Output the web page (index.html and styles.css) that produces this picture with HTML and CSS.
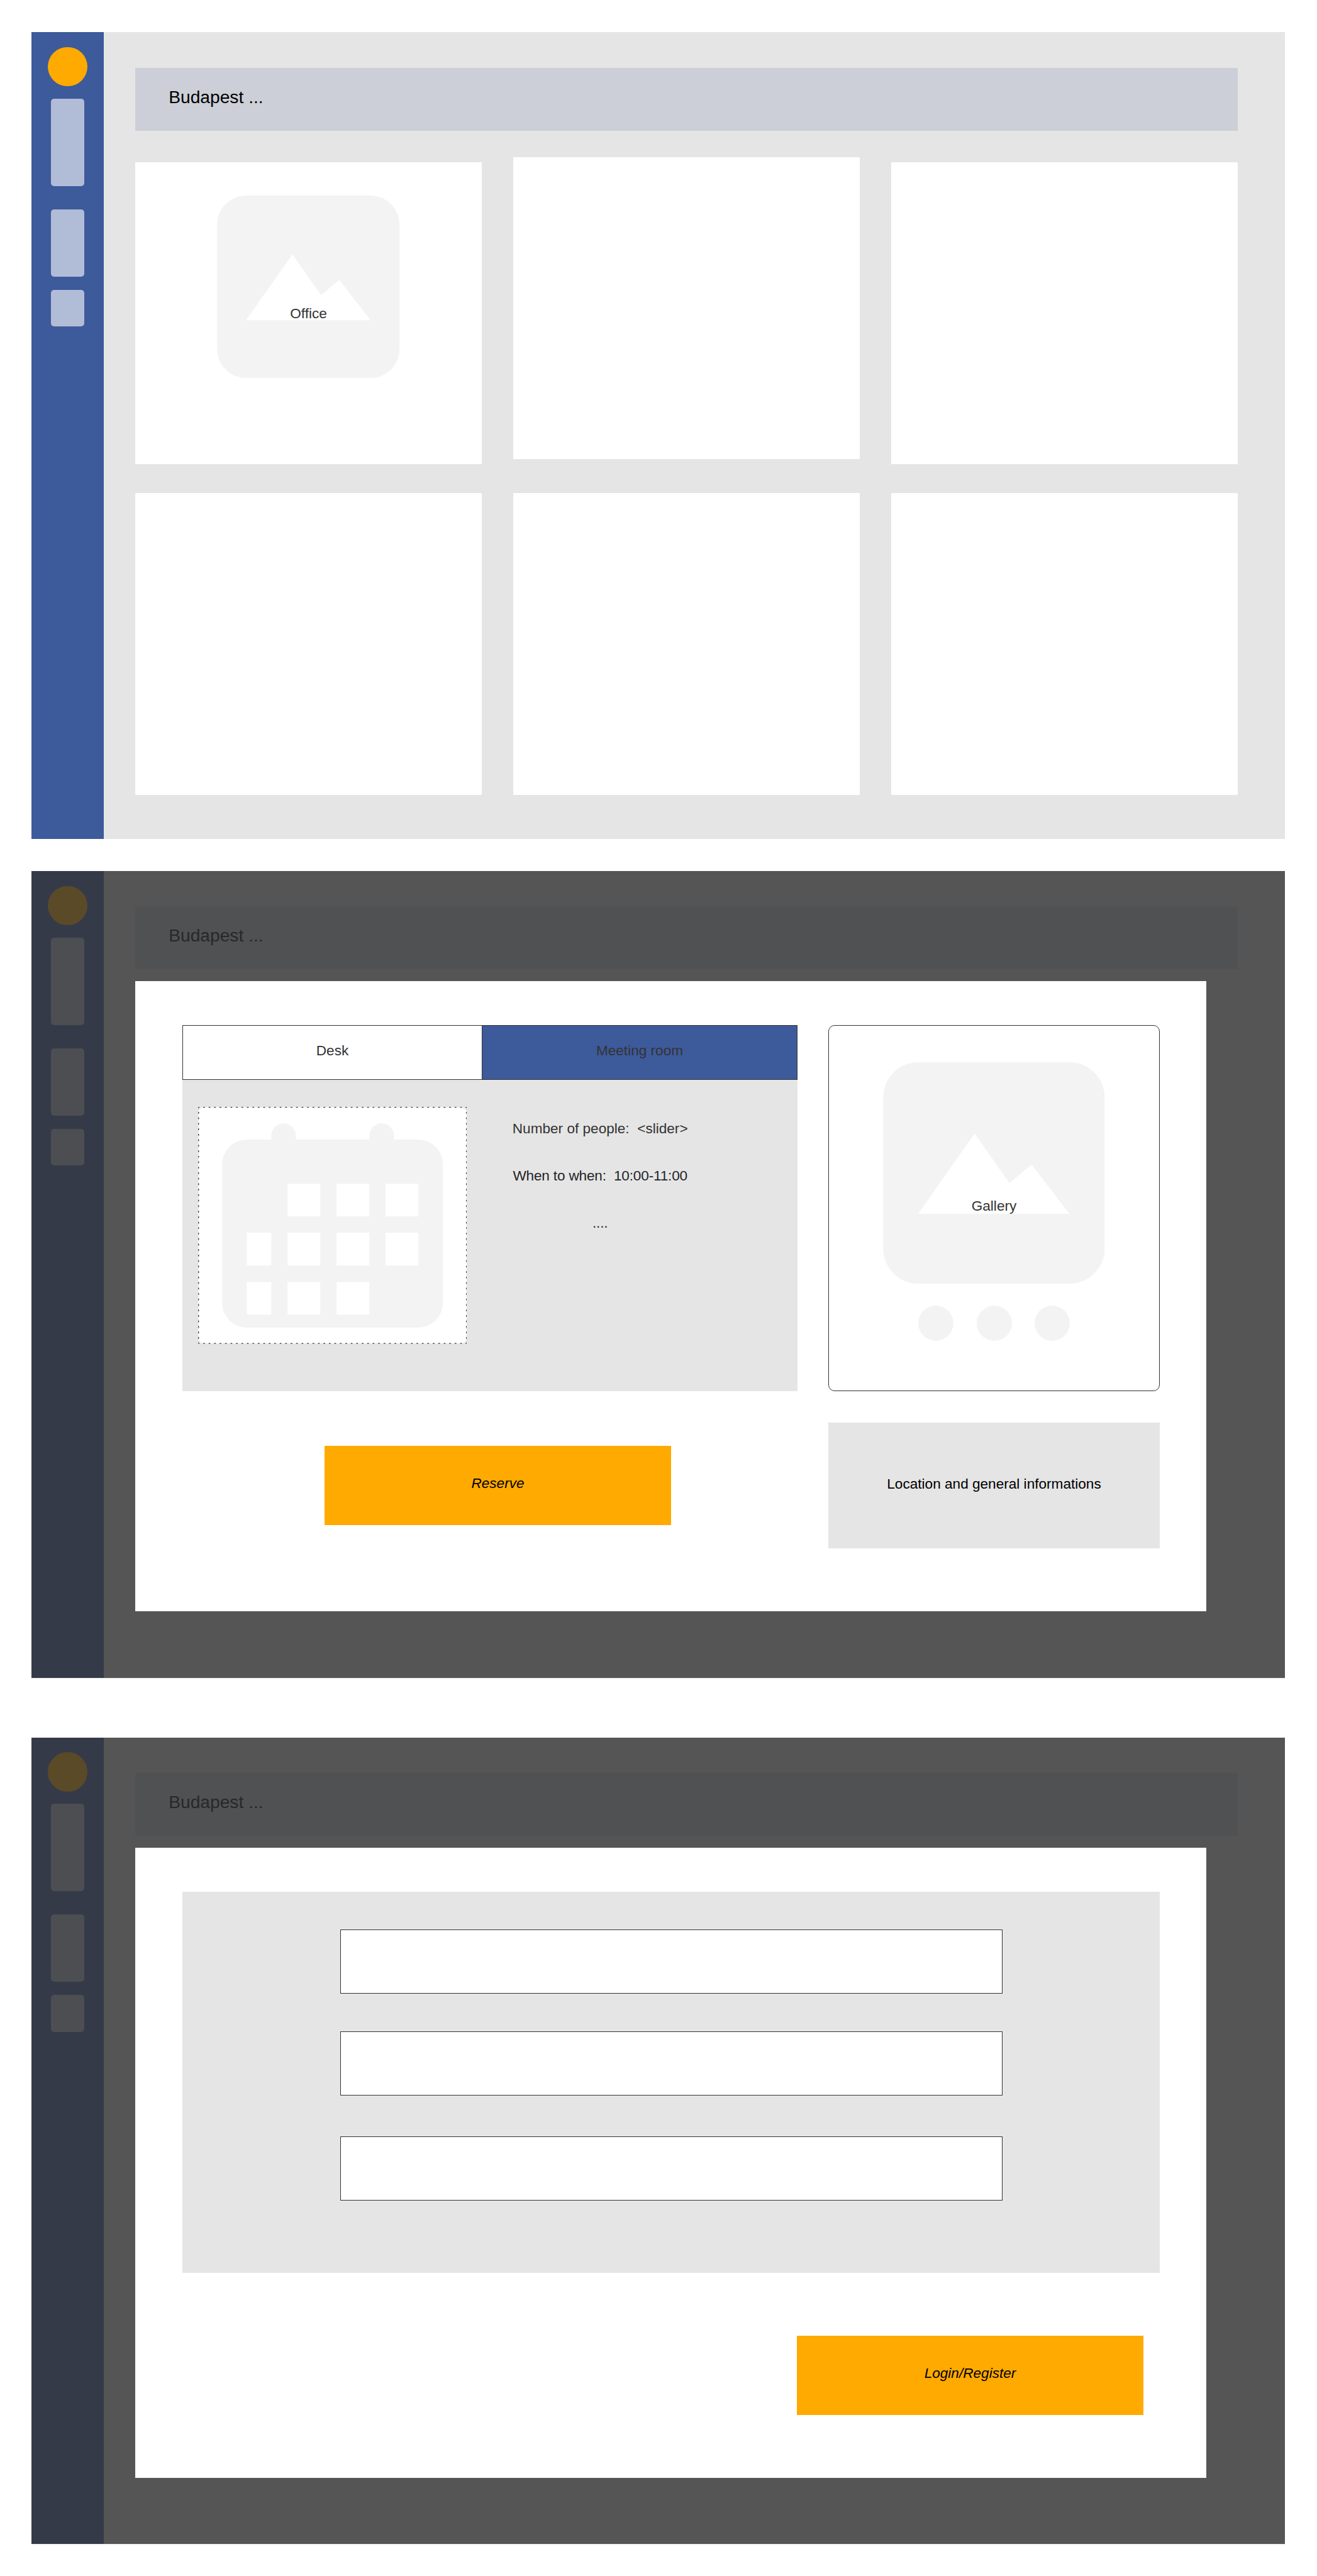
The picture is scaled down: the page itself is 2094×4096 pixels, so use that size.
FILE: index.html
```html
<!DOCTYPE html>
<html lang="en">
<head>
<meta charset="utf-8">
<title>Office reservation wireframes</title>
<link rel="stylesheet" href="styles.css">
</head>
<body>
<svg class="defs" aria-hidden="true">
  <symbol id="picture" viewBox="0 0 100 100">
    <rect width="100" height="100" rx="15.9" fill="#f3f3f3"/>
    <path d="M15.8 68.4 41.3 32.2 57 54.6 67 46.2 84.1 68.4Z" fill="#fff"/>
  </symbol>
</svg>

<section class="screen screen-overview">
  <nav class="sidebar">
    <span class="avatar"></span>
    <span class="item item-tall"></span>
    <span class="item item-medium"></span>
    <span class="item item-small"></span>
  </nav>
  <main class="content">
    <header class="topbar">Budapest ...</header>
    <div class="cards">
      <article class="card">
        <svg class="card-picture"><use href="#picture"/></svg>
        <span class="card-label">Office</span>
      </article>
      <article class="card card-raised"></article>
      <article class="card"></article>
      <article class="card"></article>
      <article class="card"></article>
      <article class="card"></article>
    </div>
  </main>
</section>

<section class="screen dimmed screen-reserve">
  <nav class="sidebar">
    <span class="avatar"></span>
    <span class="item item-tall"></span>
    <span class="item item-medium"></span>
    <span class="item item-small"></span>
  </nav>
  <main class="content">
    <header class="topbar">Budapest ...</header>
    <div class="modal reserve">
      <div class="booking">
        <div class="tabs">
          <div class="tab">Desk</div>
          <div class="tab tab-active">Meeting room</div>
        </div>
        <div class="booking-body">
          <svg class="calendar" viewBox="0 0 427.4 376.8">
            <rect x=".7" y=".7" width="426" height="375.4" rx="8" fill="#fff"/>
            <path d="M.7.7H426.7M.7 376.1H426.7" fill="none" stroke="#333" stroke-width="1.33" stroke-dasharray="2.7 5.994" stroke-dashoffset="1.35"/>
            <path d="M.7.7V376.1M426.7.7V376.1" fill="none" stroke="#333" stroke-width="1.33" stroke-dasharray="2.7 6.03" stroke-dashoffset="1.35"/>
            <g fill="#f3f3f3">
              <rect x="38.2" y="51.9" width="351" height="299.1" rx="39.2"/>
              <path d="M116.3 52V45.5a19.5 19.2 0 0 1 39 0V52ZM272.3 52V45.5a19.5 19.2 0 0 1 39 0V52Z"/>
            </g>
            <g fill="#fff">
              <path d="M142.2 122.2h52v52h-52zM220.2 122.2h52v52h-52zM298.2 122.2h52v52h-52z"/>
              <path d="M77.4 200.1h39v52.2h-39zM142.2 200.1h52v52.2h-52zM220.2 200.1h52v52.2h-52zM298.2 200.1h52v52.2h-52z"/>
              <path d="M77.4 278.4h39v51.8h-39zM142.2 278.4h52v51.8h-52zM220.2 278.4h52v51.8h-52z"/>
            </g>
          </svg>
          <div class="fields">
            <p>Number of people:  &lt;slider&gt;</p>
            <p class="strong">When to when:  10:00-11:00</p>
            <p class="strong">....</p>
          </div>
        </div>
        <div class="button">Reserve</div>
      </div>
      <aside class="details">
        <div class="gallery">
          <svg class="gallery-picture"><use href="#picture"/></svg>
          <span class="gallery-label">Gallery</span>
          <div class="dots"><i></i><i></i><i></i></div>
        </div>
        <div class="location">Location and general informations</div>
      </aside>
    </div>
  </main>
</section>

<section class="screen dimmed screen-login">
  <nav class="sidebar">
    <span class="avatar"></span>
    <span class="item item-tall"></span>
    <span class="item item-medium"></span>
    <span class="item item-small"></span>
  </nav>
  <main class="content">
    <header class="topbar">Budapest ...</header>
    <div class="modal login">
      <div class="form">
        <div class="input"></div>
        <div class="input"></div>
        <div class="input"></div>
      </div>
      <div class="button">Login/Register</div>
    </div>
  </main>
</section>
</body>
</html>
```
FILE: styles.css
```css
* { box-sizing: border-box; }

body {
  margin: 0;
  height: 4096px;
  overflow: hidden;
  display: flex;
  flex-direction: column;
  background: #fff;
  color: #333;
  font: 22.6px/28px "Liberation Sans", Arial, sans-serif;
}

.defs { position: absolute; width: 0; height: 0; }

/* Screens */
.screen {
  --frame: #e5e5e5;
  --side: #3d5a9b;
  --item: #b1bcd7;
  --accent: #ffaa00;
  --bar: #cccfd7;
  --title: #000;
  display: flex;
  flex: none;
  width: 1993px;
  height: 1283px;
  margin-left: 50px;
  background: var(--frame);
}
.dimmed {
  --frame: #555;
  --side: #353a48;
  --item: #4d4e52;
  --accent: #5a4a28;
  --bar: #505152;
  --title: #282828;
  box-shadow: 0 1px 0 #e5e5e5;
}
.screen-overview { margin-top: 51px; }
.screen-reserve { margin-top: 51px; }
.screen-login { margin-top: 95px; height: 1282px; }

/* Sidebar */
.sidebar {
  display: flex;
  flex-direction: column;
  align-items: center;
  width: 115px;
  padding-top: 24px;
  background: var(--side);
}
.screen-login .sidebar { padding-top: 23.4px; }
.avatar {
  width: 62.4px;
  height: 62.4px;
  margin-bottom: 19.6px;
  border-radius: 50%;
  background: var(--accent);
}
.item { width: 53.2px; border-radius: 5px; background: var(--item); }
.item-tall { height: 139px; margin-bottom: 37px; }
.item-medium { height: 107px; margin-bottom: 21px; }
.item-small { height: 58.5px; }

/* Content */
.content { flex: 1; padding: 56px 75px 0 50px; }
.screen-overview .content { padding-top: 57px; }
.topbar {
  display: flex;
  align-items: center;
  height: 100px;
  padding: 0 0 8px 53.2px;
  background: var(--bar);
  color: var(--title);
  font-size: 28.2px;
}

.cards {
  display: grid;
  grid-template-columns: repeat(3, 551px);
  gap: 46px 50px;
  margin-top: 50px;
}
.card { position: relative; height: 480px; background: #fff; }
.card-raised { margin: -8px 0 8px; }
.card-picture { display: block; width: 290.4px; height: 290px; margin: 52.7px auto 0; }
.card-label { position: absolute; left: 0; right: 0; top: 227px; text-align: center; }

/* Modals */
.modal { width: 1703px; height: 1002px; margin-top: 19px; background: #fff; }
.reserve { display: flex; gap: 49px; padding: 70px 0 0 75px; }
.booking { width: 978px; }
.tabs { display: flex; height: 87px; border: 1px solid #333; }
.tab {
  display: flex;
  flex: 1;
  align-items: center;
  justify-content: center;
  padding-bottom: 6px;
}
.tab:first-child { flex: 0 0 475px; }
.tab-active { border-left: 1px solid #333; background: #3d5a9b; }
.booking-body {
  display: flex;
  align-items: flex-start;
  height: 495px;
  padding: 43px 0 0 24.5px;
  background: #e5e5e5;
}
.calendar { flex: none; width: 427.4px; height: 376.8px; }
.fields {
  display: flex;
  flex-direction: column;
  gap: 47.2px;
  width: 280px;
  margin: 21px 0 0 72.3px;
  text-align: center;
  white-space: pre;
}
.fields p { margin: 0; }
.strong { color: #222428; letter-spacing: -0.18px; }

.button {
  display: flex;
  align-items: center;
  justify-content: center;
  width: 551px;
  height: 126px;
  padding-bottom: 6px;
  background: #ffaa00;
  color: #000;
  font-style: italic;
}
.booking .button { margin: 87px 0 0 226px; }

.details { width: 527px; }
.gallery {
  position: relative;
  height: 582px;
  padding-top: 58px;
  border: 1px solid #333;
  border-radius: 10px;
}
.gallery-picture { display: block; width: 352.6px; height: 352.2px; margin: 0 auto; }
.gallery-label { position: absolute; left: 0; right: 0; top: 273px; text-align: center; }
.dots { display: flex; justify-content: center; gap: 36.8px; margin-top: 34.8px; }
.dots i { width: 56px; height: 56px; border-radius: 50%; background: #f3f3f3; }
.location {
  display: flex;
  align-items: center;
  justify-content: center;
  height: 200px;
  margin-top: 50px;
  padding-bottom: 5px;
  background: #e5e5e5;
  color: #000;
}

/* Login form */
.login { padding: 70px 74px 0 75px; }
.form {
  display: flex;
  flex-direction: column;
  align-items: center;
  height: 606px;
  padding-top: 60px;
  background: #e5e5e5;
}
.input { width: 1053px; height: 102px; border: 1px solid #333; background: #fff; }
.input + .input { margin-top: 60px; }
.input + .input:last-child { margin-top: 65px; }
.login .button { margin: 100px 26px 0 auto; }
```
